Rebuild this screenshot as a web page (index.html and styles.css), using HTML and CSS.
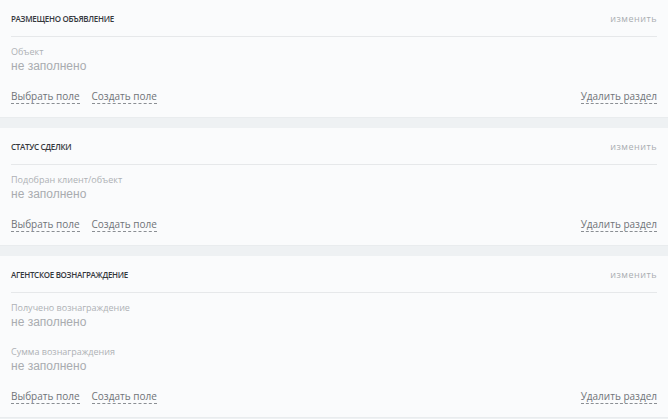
FILE: index.html
```html
<!DOCTYPE html>
<html lang="ru">
<head>
<meta charset="utf-8">
<link rel="stylesheet" href="styles.css">
</head>
<body>
<div class="page">
  <section class="card">
    <header class="card-head">
      <h2 class="card-title">Размещено объявление</h2>
      <span class="edit">изменить</span>
    </header>
    <div class="card-body">
      <div class="field">
        <div class="field-label">Объект</div>
        <div class="field-value">не заполнено</div>
      </div>
      <div class="actions">
        <div class="actions-left">
          <span class="dash-link">Выбрать поле</span>
          <span class="dash-link">Создать поле</span>
        </div>
        <span class="dash-link">Удалить раздел</span>
      </div>
    </div>
  </section>
  <section class="card">
    <header class="card-head">
      <h2 class="card-title">Статус сделки</h2>
      <span class="edit">изменить</span>
    </header>
    <div class="card-body">
      <div class="field">
        <div class="field-label">Подобран клиент/объект</div>
        <div class="field-value">не заполнено</div>
      </div>
      <div class="actions">
        <div class="actions-left">
          <span class="dash-link">Выбрать поле</span>
          <span class="dash-link">Создать поле</span>
        </div>
        <span class="dash-link">Удалить раздел</span>
      </div>
    </div>
  </section>
  <section class="card">
    <header class="card-head">
      <h2 class="card-title">Агентское вознаграждение</h2>
      <span class="edit">изменить</span>
    </header>
    <div class="card-body">
      <div class="field">
        <div class="field-label">Получено вознаграждение</div>
        <div class="field-value">не заполнено</div>
      </div>
      <div class="field">
        <div class="field-label">Сумма вознаграждения</div>
        <div class="field-value">не заполнено</div>
      </div>
      <div class="actions">
        <div class="actions-left">
          <span class="dash-link">Выбрать поле</span>
          <span class="dash-link">Создать поле</span>
        </div>
        <span class="dash-link">Удалить раздел</span>
      </div>
    </div>
  </section>
</div>
</body>
</html>
```

FILE: styles.css
```css
* { box-sizing: border-box; }
html, body {
  margin: 0;
  padding: 0;
  background: #eef1f3;
}
body {
  font-family: "Open Sans", "Liberation Sans", sans-serif;
}
.page {
  display: flex;
  flex-direction: column;
  gap: 10px;
}
.card {
  background: #fafbfc;
  padding: 0 11px;
  border-bottom: 1px solid #e9ecee;
}
.card-head {
  height: 37px;
  display: flex;
  align-items: center;
  justify-content: space-between;
  border-bottom: 1px solid #e6e8ea;
}
.card-title {
  margin: 0;
  font-size: 8px;
  font-weight: 600;
  text-transform: uppercase;
  letter-spacing: -0.3px;
  color: #35383c;
}
.edit {
  font-size: 9px;
  letter-spacing: 0.5px;
  color: #a9adb1;
}
.card-body {
  padding: 9px 0 13px;
}
.field {
  margin-bottom: 16px;
}
.field-label {
  font-size: 9px;
  line-height: 12px;
  color: #aeb1b5;
}
.field-value {
  font-family: "Liberation Sans", Arial, sans-serif;
  font-size: 12px;
  line-height: 16px;
  color: #a9acb0;
}
.actions {
  display: flex;
  justify-content: space-between;
  align-items: center;
}
.actions-left {
  display: flex;
  gap: 12px;
}
.dash-link {
  font-size: 10px;
  line-height: 13px;
  color: #6f7378;
  border-bottom: 1px dashed #8a8e93;
}
```
